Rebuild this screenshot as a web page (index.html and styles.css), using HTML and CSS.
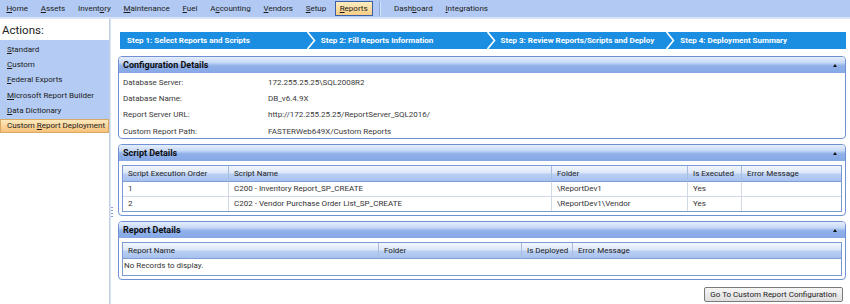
FILE: index.html
```html
<!DOCTYPE html>
<html>
<head>
<meta charset="utf-8">
<link rel="stylesheet" href="styles.css">
</head>
<body>
<div class="menubar">
  <span class="mi"><u>H</u>ome</span>
  <span class="mi"><u>A</u>ssets</span>
  <span class="mi">Invent<u>o</u>ry</span>
  <span class="mi"><u>M</u>aintenance</span>
  <span class="mi"><u>F</u>uel</span>
  <span class="mi">A<u>c</u>counting</span>
  <span class="mi"><u>V</u>endors</span>
  <span class="mi"><u>S</u>etup</span>
  <span class="mi active"><u>R</u>eports</span>
  <span class="msep"></span>
  <span class="mi">Dash<u>b</u>oard</span>
  <span class="mi"><u>I</u>ntegrations</span>
</div>
<div class="layout">
  <aside class="sidebar">
    <div class="actions-title">Actions:</div>
    <ul class="actions">
      <li><u>S</u>tandard</li>
      <li><u>C</u>ustom</li>
      <li><u>F</u>ederal Exports</li>
      <li><u>M</u>icrosoft Report Builder</li>
      <li><u>D</u>ata Dictionary</li>
      <li class="sel">Custom <u>R</u>eport Deployment</li>
    </ul>
  </aside>
  <div class="splitter"><span class="grip"></span></div>
  <main class="main">
    <div class="steps">
      <div class="step first">Step 1: Select Reports and Scripts</div>
      <div class="step"><svg class="chev" width="9" height="17" viewBox="0 0 9 17"><polyline points="0.5,0 7.5,8.5 0.5,17" fill="none" stroke="#fff" stroke-width="1.6"/></svg>Step 2: Fill Reports Information</div>
      <div class="step"><svg class="chev" width="9" height="17" viewBox="0 0 9 17"><polyline points="0.5,0 7.5,8.5 0.5,17" fill="none" stroke="#fff" stroke-width="1.6"/></svg>Step 3: Review Reports/Scripts and Deploy</div>
      <div class="step"><svg class="chev" width="9" height="17" viewBox="0 0 9 17"><polyline points="0.5,0 7.5,8.5 0.5,17" fill="none" stroke="#fff" stroke-width="1.6"/></svg>Step 4: Deployment Summary</div>
    </div>

    <section class="panel">
      <div class="phead"><span>Configuration Details</span><span class="collapse"></span></div>
      <div class="kv"><span class="k">Database Server:</span><span class="v">172.255.25.25\SQL2008R2</span></div>
      <div class="kv"><span class="k">Database Name:</span><span class="v">DB_v6.4.9X</span></div>
      <div class="kv"><span class="k">Report Server URL:</span><span class="v">http://172.255.25.25/ReportServer_SQL2016/</span></div>
      <div class="kv"><span class="k">Custom Report Path:</span><span class="v">FASTERWeb649X/Custom Reports</span></div>
    </section>

    <section class="panel">
      <div class="phead"><span>Script Details</span><span class="collapse"></span></div>
      <div class="grid script-grid">
        <div class="gh">Script Execution Order</div><div class="gh">Script Name</div><div class="gh">Folder</div><div class="gh">Is Executed</div><div class="gh last">Error Message</div>
        <div class="gc">1</div><div class="gc">C200 - Inventory Report_SP_CREATE</div><div class="gc">\ReportDev1</div><div class="gc">Yes</div><div class="gc last"></div>
        <div class="gc">2</div><div class="gc">C202 - Vendor Purchase Order List_SP_CREATE</div><div class="gc">\ReportDev1\Vendor</div><div class="gc">Yes</div><div class="gc last"></div>
      </div>
    </section>

    <section class="panel">
      <div class="phead"><span>Report Details</span><span class="collapse"></span></div>
      <div class="grid report-grid">
        <div class="gh">Report Name</div><div class="gh">Folder</div><div class="gh">Is Deployed</div><div class="gh last">Error Message</div>
        <div class="norec">No Records to display.</div>
      </div>
    </section>

    <div class="btnrow"><button class="btn">Go To Custom Report Configuration</button></div>
  </main>
</div>
</body>
</html>
```
FILE: styles.css
```css
* { box-sizing: border-box; }
html, body { margin: 0; padding: 0; background: #fff; }
body {
  font-family: Roboto, "Open Sans", sans-serif;
  font-size: 8px;
  color: #333;
  width: 850px;
  height: 304px;
  overflow: hidden;
}
u { text-decoration: underline; text-underline-offset: 1px; }

.menubar {
  display: flex;
  align-items: center;
  height: 19px;
  background: #b2caf3;
  border-bottom: 2px solid #d9e5f9;
}
.mi {
  padding: 0 6.4px;
  line-height: 15px;
  color: #1a1a1a;
  white-space: nowrap;
}
.mi.active {
  margin: 0 2px;
  padding: 0 4px;
  border: 1px solid #3a5fa8;
  background: linear-gradient(#fdecc0, #f7cd85);
  line-height: 13px;
}
.msep {
  width: 2px;
  height: 15px;
  background: #8aa6d8;
  border-right: 1px solid #d6e2f8;
  margin: 0 7px 0 4px;
}

.layout {
  display: flex;
  height: 285px;
}
.sidebar {
  width: 110px;
  border-right: 1px solid #c5cfdf;
  background: #fff;
}
.actions-title {
  font-size: 11.5px;
  color: #222;
  padding: 4px 0 0 2px;
  height: 21px;
}
.actions {
  list-style: none;
  margin: 0;
  padding: 0;
  background: #b4ccf4;
}
.actions li {
  height: 15.6px;
  line-height: 15px;
  padding-left: 7px;
  color: #1a1a1a;
  white-space: nowrap;
}
.actions li:first-child { padding-top: 2px; height: 16.6px; }
.actions li.sel {
  background: linear-gradient(#fde9bd, #f6c27a);
  border: 1px solid #d9a862;
  line-height: 12px;
  height: 14px;
  padding-left: 6px;
}

.splitter {
  width: 7px;
  border-left: 1px solid #d7e3f7;
  position: relative;
}
.grip {
  position: absolute;
  left: 0;
  top: 188px;
  width: 2px;
  height: 10px;
  background: repeating-linear-gradient(#7f9ccf 0 1px, transparent 1px 3px);
}

.main {
  flex: 1;
  padding: 13px 4px 0 1px;
  display: flex;
  flex-direction: column;
}
.steps {
  display: flex;
  height: 17px;
  margin-left: 2px;
  background: #1b8ee2;
  margin-bottom: 7px;
}
.step {
  flex: 1 1 0;
  display: flex;
  align-items: center;
  color: #fff;
  font-weight: bold;
  white-space: nowrap;
}
.step.first { padding-left: 7px; }
.chev { flex: none; margin-right: 5px; }

.panel {
  border: 1px solid #6f91d3;
  border-radius: 4px;
  margin-bottom: 5px;
  overflow: hidden;
}
.phead {
  display: flex;
  justify-content: space-between;
  align-items: center;
  height: 16px;
  padding: 0 5px 0 4px;
  font-weight: bold;
  font-size: 9px;
  color: #0d0d0d;
  background: linear-gradient(#e6eefc 0%, #c8d9f6 35%, #8fb0e9 55%, #86a8e6 100%);
}
.collapse {
  width: 0;
  height: 0;
  border-left: 2px solid transparent;
  border-right: 2px solid transparent;
  border-bottom: 3px solid #111;
  margin-right: 3px;
}
.kv {
  display: flex;
  height: 16.3px;
  align-items: center;
  padding: 2px 0 0 4px;
  color: #3a3a3a;
}
.k { width: 145px; }

.grid {
  margin: 4px 3px 3px 3px;
  border: 1px solid #7b9ad4;
  display: grid;
}
.script-grid { grid-template-columns: 106px 323px 136px 54px 1fr; }
.report-grid { grid-template-columns: 256px 143px 51px 1fr; }
.gh {
  height: 16px;
  line-height: 16px;
  padding-left: 5px;
  background: linear-gradient(#f3f7fd 0%, #dce7f9 45%, #b9cef2 55%, #a8c2ef 100%);
  border-right: 1px solid #a9bde0;
  border-bottom: 1px solid #7f9dd4;
  white-space: nowrap;
  color: #222;
}
.gh.last, .gc.last { border-right: none; }
.gc {
  height: 15px;
  line-height: 14px;
  padding-left: 5px;
  border-right: 1px solid #d1d8e6;
  border-bottom: 1px solid #d1d8e6;
  white-space: nowrap;
}
.script-grid .gc:nth-last-child(-n+5) { border-bottom: none; height: 14px; }
.norec {
  grid-column: 1 / -1;
  height: 16px;
  line-height: 13px;
  padding-left: 1px;
}

.btnrow {
  display: flex;
  justify-content: flex-end;
  padding-top: 2px;
  padding-right: 3px;
}
.btn {
  font-family: inherit;
  font-size: 8px;
  color: #222;
  height: 15px;
  width: 139px;
  padding: 0;
  border: 1px solid #7a7a7a;
  border-radius: 2px;
  background: linear-gradient(#f6f6f6, #dedede);
}
```
